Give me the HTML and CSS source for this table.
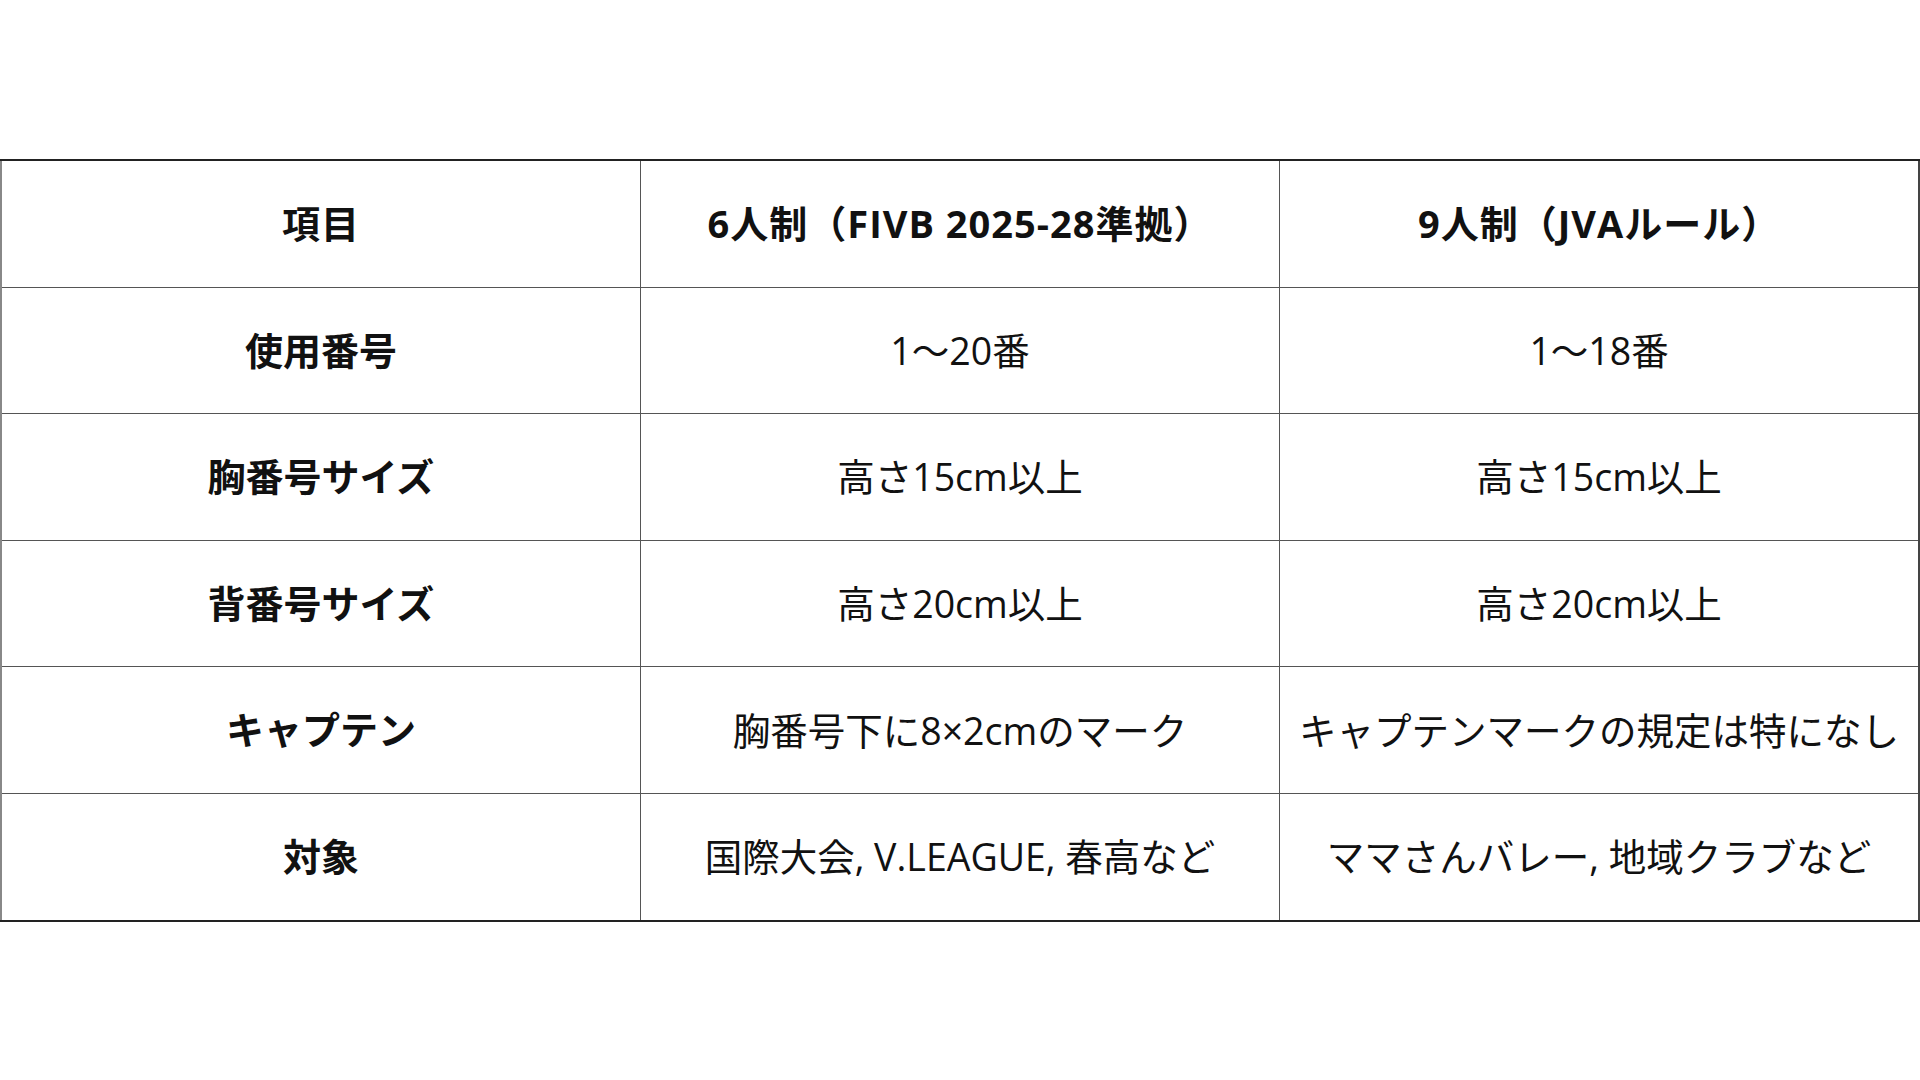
FILE: index.html
```html
<!DOCTYPE html>
<html lang="ja">
<head>
<meta charset="utf-8">
<title>ゼッケン規定比較</title>
<link rel="stylesheet" href="styles.css">
</head>
<body>
<main class="page">
  <table class="rules">
    <thead>
      <tr>
        <th>項目</th>
        <th>6人制（FIVB 2025-28準拠）</th>
        <th>9人制（JVAルール）</th>
      </tr>
    </thead>
    <tbody>
      <tr>
        <th>使用番号</th>
        <td>1〜20番</td>
        <td>1〜18番</td>
      </tr>
      <tr>
        <th>胸番号サイズ</th>
        <td>高さ15cm以上</td>
        <td>高さ15cm以上</td>
      </tr>
      <tr>
        <th>背番号サイズ</th>
        <td>高さ20cm以上</td>
        <td>高さ20cm以上</td>
      </tr>
      <tr>
        <th>キャプテン</th>
        <td>胸番号下に8×2cmのマーク</td>
        <td>キャプテンマークの規定は特になし</td>
      </tr>
      <tr>
        <th>対象</th>
        <td>国際大会, V.LEAGUE, 春高など</td>
        <td>ママさんバレー, 地域クラブなど</td>
      </tr>
    </tbody>
  </table>
</main>
</body>
</html>
```

FILE: styles.css
```css
html, body {
  margin: 0;
  padding: 0;
  background: #ffffff;
}

body {
  width: 1920px;
  height: 1080px;
  overflow: hidden;
  font-family: "Open Sans", "Noto Sans CJK JP", sans-serif;
  color: #111111;
}

.page {
  padding-top: 159px;
}

.rules {
  width: 1920px;
  table-layout: fixed;
  border-collapse: collapse;
  border-top: 2px solid #222222;
  border-bottom: 2px solid #222222;
  border-left: 2px solid #888888;
  border-right: 2px solid #444444;
}

.rules th,
.rules td {
  height: 125.6px;
  padding: 0;
  text-align: center;
  vertical-align: middle;
  border: 1px solid #555555;
  font-size: 38px;
  line-height: 1.2;
  white-space: nowrap;
}

.rules th {
  font-weight: 700;
}

.rules thead th {
  letter-spacing: 1px;
  border-top: 2px solid #222222;
}

.rules td {
  font-weight: 400;
  font-size: 37.5px;
}

.rules tbody tr:last-child th,
.rules tbody tr:last-child td {
  border-bottom: 2px solid #222222;
}
```
